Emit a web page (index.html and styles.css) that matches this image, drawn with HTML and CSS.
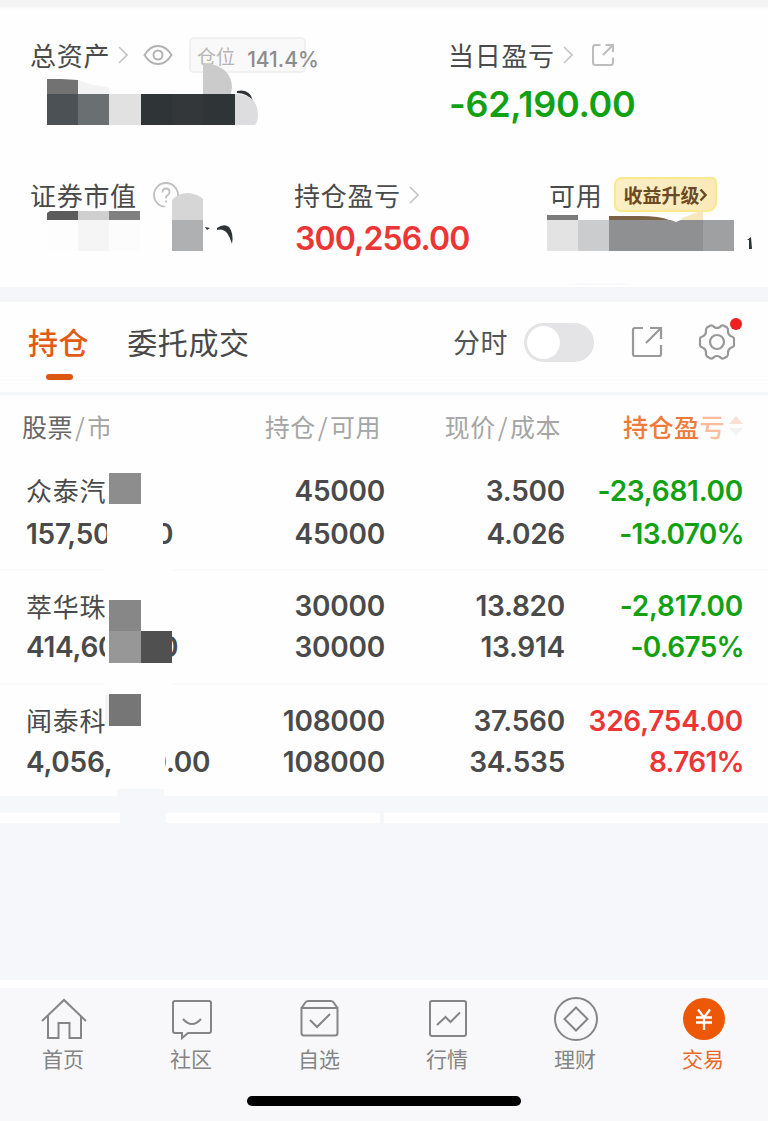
FILE: index.html
```html
<!DOCTYPE html>
<html lang="zh-CN">
<head>
<meta charset="utf-8">
<title>持仓</title>
<link rel="stylesheet" href="styles.css">
</head>
<body>
<main class="page">
  <div class="topstrip"></div>
  <section class="summary">
    <div class="sum-row first">
      <div class="cell wide">
        <div class="label"><span class="t4">总资产</span>
          <svg class="chev" width="10" height="18" viewBox="0 0 10 18"><path d="M1 1l8 8-8 8"/></svg>
          <svg class="eye" width="30" height="22" viewBox="0 0 30 22"><path d="M1.500 11Q7 2 15 2t13.500 9Q23 20 15 20T1.500 11z"/><circle cx="15" cy="11" r="4.500"/></svg>
          <span class="ratio"><span class="ratio-name">仓位</span><span class="ratio-num">141.4%</span></span>
        </div>
      </div>
      <div class="cell">
        <div class="label"><span class="t4">当日盈亏</span>
          <svg class="chev" width="10" height="18" viewBox="0 0 10 18"><path d="M1 1l8 8-8 8"/></svg>
          <svg class="share-s" width="24" height="24" viewBox="0 0 24 24"><path d="M9.500 2H4.500Q2 2 2 4.500V19.500Q2 22 4.500 22H19.500Q22 22 22 19.500V14.500M14.500 2H22V9M22 2L12 12"/></svg>
        </div>
        <div class="big green">-62,190.00</div>
      </div>
    </div>
    <div class="sum-row second">
      <div class="cell mv">
        <div class="label"><span class="t4">证券市值</span>
          <svg class="help" width="28" height="28" viewBox="0 0 28 28"><circle cx="14" cy="14" r="12"/><path d="M10.500 11.500q0-4 3.500-4t3.500 3.500q0 2-2 3.300T14 17.500M14 19.500v2"/></svg>
        </div>
      </div>
      <div class="cell pl">
        <div class="label"><span class="t4">持仓盈亏</span>
          <svg class="chev" width="10" height="18" viewBox="0 0 10 18"><path d="M1 1l8 8-8 8"/></svg>
        </div>
        <div class="mid red">300,256.00</div>
      </div>
      <div class="cell">
        <div class="label"><span class="t4">可用</span><span class="promo">收益升级<svg width="8" height="14" viewBox="0 0 8 14"><path d="M1.500 1.500L6.500 7l-5 5.500"/></svg></span></div>
      </div>
    </div>
  </section>
  <div class="gap"></div>
  <section class="tabs">
    <div class="tab active">持仓</div>
    <div class="tab">委托成交</div>
    <div class="tools">
      <span class="tool-text">分时</span>
      <span class="switch"><i></i></span>
      <svg class="share-l" width="34" height="34" viewBox="0 0 34 34"><path d="M13 3H5Q3 3 3 5V29Q3 31 5 31H29Q31 31 31 29V20M20 3H31V14M31 3L16 18"/></svg>
      <span class="gear"><svg width="38" height="38" viewBox="0 0 38 38"><path d="M12.500 2.500Q14.500 2 16 4Q19 6 22 4Q23.500 2 25.500 2.500L29 4.500Q30.500 6 30 8.500Q30 12 33.500 13.500Q36 14 36 16V22Q36 24 33.500 24.500Q30 26 30 29.500Q30.500 32 29 33.500L25.500 35.500Q23.500 36 22 34Q19 32 16 34Q14.500 36 12.500 35.500L9 33.500Q7.500 32 8 29.500Q8 26 4.500 24.500Q2 24 2 22V16Q2 14 4.500 13.500Q8 12 8 8.500Q7.500 6 9 4.500Z"/><circle cx="19" cy="19" r="7"/></svg><b class="dot"></b></span>
    </div>
  </section>
  <div class="band"></div>
  <section class="holdings">
    <div class="cols head">
      <div class="left"><span class="dark">股票</span><span class="slash">/</span>市</div>
      <div>持仓<span class="slash">/</span>可用</div>
      <div>现价<span class="slash">/</span>成本</div>
      <div class="sort"><span>持仓盈</span><span class="fade">亏</span><svg width="16" height="20" viewBox="0 0 16 20"><path d="M8 0l7 8H1z" fill="#fce0d2"/><path d="M8 20l7-8H1z" fill="#f3f3f3"/></svg></div>
    </div>
    <div class="cols row r1">
      <div class="left name">众泰汽</div><div>45000</div><div>3.500</div><div class="green">-23,681.00</div>
      <div class="left">157,500.00</div><div>45000</div><div>4.026</div><div class="green pct">-13.070%</div>
    </div>
    <div class="cols row r2">
      <div class="left name">萃华珠</div><div>30000</div><div>13.820</div><div class="green">-2,817.00</div>
      <div class="left">414,600.00</div><div>30000</div><div>13.914</div><div class="green pct">-0.675%</div>
    </div>
    <div class="cols row r3">
      <div class="left name">闻泰科</div><div>108000</div><div>37.560</div><div class="red">326,754.00</div>
      <div class="left">4,056,480.00</div><div>108000</div><div>34.535</div><div class="red pct">8.761%</div>
    </div>
  </section>
  <section class="empty"><div class="stub a"></div><div class="stub b"></div><div class="stub c"></div></section>
  <nav class="nav">
    <div class="items">
      <div class="item"><svg width="48" height="48" viewBox="0 0 48 48"><path d="M2 25L24 4l22 21M8 20V42H18.500V27H29.500V42H41V20"/></svg><span>首页</span></div>
      <div class="item"><svg width="48" height="48" viewBox="0 0 48 48"><path d="M7 5H41Q43 5 43 7V35Q43 37 41 37H20L14 42V37H7Q5 37 5 35V7Q5 5 7 5zM15 23Q24 33 33 23"/></svg><span>社区</span></div>
      <div class="item"><svg width="48" height="48" viewBox="0 0 48 48"><path d="M5.500 12L9 7Q10 5 12 5H35Q37 5 38 7L41.500 12M5.500 12H41.500V37Q41.500 39.500 39 39.500H8Q5.500 39.500 5.500 37zM14 24l7 7 13-13"/></svg><span>自选</span></div>
      <div class="item"><svg width="48" height="48" viewBox="0 0 48 48"><rect x="6" y="5" width="36" height="35" rx="2"/><path d="M13 29l8.500-8 5 5L36 16.500"/></svg><span>行情</span></div>
      <div class="item"><svg width="48" height="48" viewBox="0 0 48 48"><circle cx="24" cy="23" r="21"/><path d="M24 11.500L35.500 23 24 34.500 12.500 23z"/></svg><span>理财</span></div>
      <div class="item on"><svg width="48" height="48" viewBox="0 0 48 48"><circle class="disc" cx="24" cy="23" r="21"/><path class="yen" d="M18 13.500l6 8 6-8M16 21.500H32M16 26.500H32M24 21.500V34"/></svg><span>交易</span></div>
    </div>
    <div class="homebar"></div>
  </nav>

  <!-- privacy mosaic over the account figures -->
  <svg class="mosaic" width="768" height="1121" viewBox="0 0 768 1121">
    <path fill="#727272" d="M47 79h14l17 1v14H47z"/><path fill="#f3f3f3" d="M78 80q18 7 31 7v7H78z"/>
    <path fill="#cbcbcb" d="M203 63q28 2 29 24l-1 7h-28z"/>
    <path fill="#2d3336" d="M237 91q13-3 16 10q-6-8-16-8z"/>
    <path fill="#dddddf" d="M235 94q22 0 23 20 0 8-3 11h-20z"/>
    <path fill="#4c5155" d="M47 94h31v31H47z"/><path fill="#6a6f72" d="M78 94h31v31H78z"/><path fill="#e1e1e1" d="M109 94h32v31h-32z"/><path fill="#2f3437" d="M141 94h94v31h-94z"/><path fill="#343739" d="M172 94h31v31h-31z"/>
    <path fill="#5c5c5c" d="M47 213l3-2h28v9H47z"/><path fill="#cfcfcf" d="M78 211h31v9H78z"/><path fill="#808080" d="M109 211h31v9h-31z"/>
    <path fill="#fdfdfd" d="M47 220h31v31H47z"/><path fill="#f5f5f5" d="M78 220h31v31H78z"/><path fill="#fcfcfc" d="M109 220h31v31h-31z"/>
    <path fill="#fefefe" d="M162 209l10-8v10z"/>
    <path fill="#d6d6d6" d="M172 200q6-7 16-7 10 1 15 6v21h-31z"/><path fill="#afb0b2" d="M172 220h31v31h-31z"/>
    <path fill="#2d3336" d="M205 227l5 1-3 2zM217 228q7-5 12-1 5 6 3 17-2-7-5-11-4-5-10-3z"/>
    <path fill="#7b7b7b" d="M547 215h31v5h-31z"/><path fill="#7b6244" d="M609 216h31q20 0 29 4h-60z"/><path fill="#f8e6bd" d="M680 219l23-9v10h-23z"/>
    <path fill="#e3e3e3" d="M547 220h31v31h-31z"/><path fill="#cbccce" d="M578 220h31v31h-31z"/><path fill="#8f9092" d="M609 220h94v31h-94z"/><path fill="#9fa0a2" d="M703 220h31v31h-31z"/><path fill="#fff" d="M668 219h15l-7 3z"/>
    <path fill="#2d3336" d="M747 240l4-3 1 12h-3v-9z"/>
    <path fill="#f8f8fa" d="M567 285q12-2 35-2t33 2z"/>
    <path fill="#fefefe" d="M109 409h31v40h-31zM107 505h56v70h-56zM105 568h66v5h-66zM105 597h67v90h-67zM111 741h54v48h-54z"/>
    <path fill="#8d8d8d" d="M109 473h32v31h-32z"/><path fill="#878787" d="M109 600h32v31h-32z"/><path fill="#979797" d="M109 631h32v32h-32z"/><path fill="#505050" d="M141 631h31v32h-31z"/>
    <path fill="#f3f3f3" d="M105 695h4v31h-4z"/><path fill="#767676" d="M109 694h32v32h-32z"/>
    <path fill="#f6f7fa" d="M117 789h47v9h-47z"/>
  </svg>
</main>
</body>
</html>
```
FILE: styles.css
```css
* { box-sizing: border-box; }
body { margin: 0; background: #fff; }
.page { position: relative; width: 768px; height: 1121px; overflow: hidden; background: #fefefe; color: #4a4a4a; font-family: "Noto Sans CJK SC", sans-serif; }
svg { display: block; flex: none; fill: none; }
.topstrip { height: 9px; background: linear-gradient(#f4f4f4 70%, #fdfdfd); }
.summary { height: 278px; }
.sum-row { display: flex; padding-left: 31px; }
.first { height: 140px; padding-top: 26px; }
.second { height: 138px; padding-top: 26px; }
.wide { width: 418px; }
.mv { width: 264px; }
.pl { width: 255px; }
.label { display: flex; align-items: center; height: 40px; font-size: 26px; line-height: 40px; white-space: nowrap; }
.t4 { letter-spacing: .7px; margin-top: -1px; margin-left: -1px; }
.chev { margin-left: 8px; stroke: #c4c4c4; stroke-width: 1.6; }
.eye { margin-left: 15px; stroke: #b2b2b2; stroke-width: 2; }
.ratio { display: flex; width: 117px; height: 36px; margin-left: 16px; border: 2px solid #f0f0f0; border-radius: 5px; background: #f9f9f9; }
.ratio-name { margin-left: 6px; font-size: 19px; line-height: 34px; color: #b5b5b5; }
.ratio-num { margin: 3px 0 0 12px; font: 500 21px/36px Inter, sans-serif; color: #8c8c8c; }
.share-s { margin-left: 18px; stroke: #bdbdbd; stroke-width: 2; }
.help { margin-left: 15px; stroke: #bfbfbf; stroke-width: 1.8; }
.big { height: 56px; margin-top: 1px; font: 600 36px/56px Inter, sans-serif; letter-spacing: -.3px; }
.mid { height: 44px; margin-top: 2px; font: 600 32px/44px Inter, sans-serif; letter-spacing: -.85px; }
.green { color: #12a112; }
.red { color: #ec3535; }
.promo { display: flex; align-items: center; gap: 0; width: 103px; height: 35px; margin: -1px 0 0 12px; padding-left: 7px; border: 2px solid #fae98f; border-radius: 8px 5px 9px 7px; background: linear-gradient(110deg, #fbefc6, #fae9b9); font-size: 19px; font-weight: 700; line-height: 30px; color: #6b4a24; }
.promo svg { stroke: #6b4a24; stroke-width: 2.4; }
.gap { height: 15px; background: #f5f6f9; }
.tabs { display: flex; height: 79px; padding-left: 28px; border-bottom: 2px solid #f9f9fa; }
.tab { position: relative; height: 78px; margin-right: 38px; font-size: 30px; line-height: 79px; letter-spacing: .6px; color: #484848; }
.active { color: #e25b14; font-weight: 500; }
.active::after { content: ""; position: absolute; left: 18px; bottom: 0; width: 27px; height: 6px; border-radius: 3px; background: #dc5710; }
.tools { display: flex; align-items: center; height: 80px; margin-left: auto; padding-right: 32px; }
.tool-text { font-size: 27px; line-height: 60px; letter-spacing: .5px; color: #555; }
.switch { width: 70px; height: 39px; margin: 0 1px 0 16px; padding: 3px; border-radius: 20px; background: #e4e4e6; }
.switch i { display: block; width: 33px; height: 33px; border-radius: 50%; background: #fff; }
.share-l { margin-left: 35px; stroke: #999; stroke-width: 2.2; }
.gear { position: relative; margin-left: 34px; }
.gear svg { stroke: #999; stroke-width: 2.2; }
.dot { position: absolute; left: 32px; top: -5px; width: 12px; height: 12px; border-radius: 50%; background: #ee2020; }
.band { height: 14px; border-bottom: 3px solid #f6f7fb; }
.holdings { height: 401px; }
.cols { display: grid; grid-template-columns: 229px 130px 180px 178px; align-content: start; padding: 0 25px 0 26px; text-align: right; white-space: nowrap; }
.left { text-align: left; }
.head { height: 64px; font-size: 25px; line-height: 62px; letter-spacing: .5px; color: #a5a5a5; }
.head > div { position: relative; right: 4px; }
.dark { color: #666; }
.slash { margin: 0 2px; }
.sort { display: flex; align-items: center; justify-content: flex-end; color: #f07a3a; font-weight: 500; }
.sort svg { margin-left: 3px; }
.head > .sort { right: -1px; }
.fade { color: #f9bd9c; }
.row { font: 600 28px/43px Inter, sans-serif; letter-spacing: -.25px; color: #4a4a4a; border-bottom: 2px solid #fafafb; }
.pct { letter-spacing: -.7px; margin-right: -1px; }
.name { font: 400 26px/39px "Noto Sans CJK SC", sans-serif; letter-spacing: .7px; }
.r1 { height: 112px; padding-top: 11px; }
.r2 { height: 114px; padding-top: 15px; line-height: 41px; }
.r3 { height: 111px; padding-top: 16px; line-height: 41px; border: 0; }
.r3 .name { line-height: 37px; }
.empty { display: grid; grid-template-columns: 120px 46px 214px 4px 384px; height: 184px; padding-top: 17px; background: #f6f7fa; }
.stub { height: 10px; background: #fefefe; }
.stub.b { grid-column: 3; }
.stub.c { grid-column: 5; }
.nav { height: 141px; border-top: 8px solid #fff; background: #f8f8fb; }
.items { display: flex; height: 109px; }
.item { width: 128px; height: 100px; padding-top: 8px; display: flex; flex-direction: column; align-items: center; font-size: 21px; line-height: 30px; color: #858585; }
.item svg { stroke: #858585; stroke-width: 2; }
.item span { margin: -1px 2px 0 0; }
.item.on { color: #e86727; }
.item .disc { fill: #ec5805; stroke: none; }
.item .yen { stroke: #fff; stroke-width: 2.3; }
.homebar { width: 274px; height: 10px; margin: -1px 0 0 247px; border-radius: 5px; background: #000; }
.mosaic { position: absolute; left: 0; top: 0; pointer-events: none; }
```
